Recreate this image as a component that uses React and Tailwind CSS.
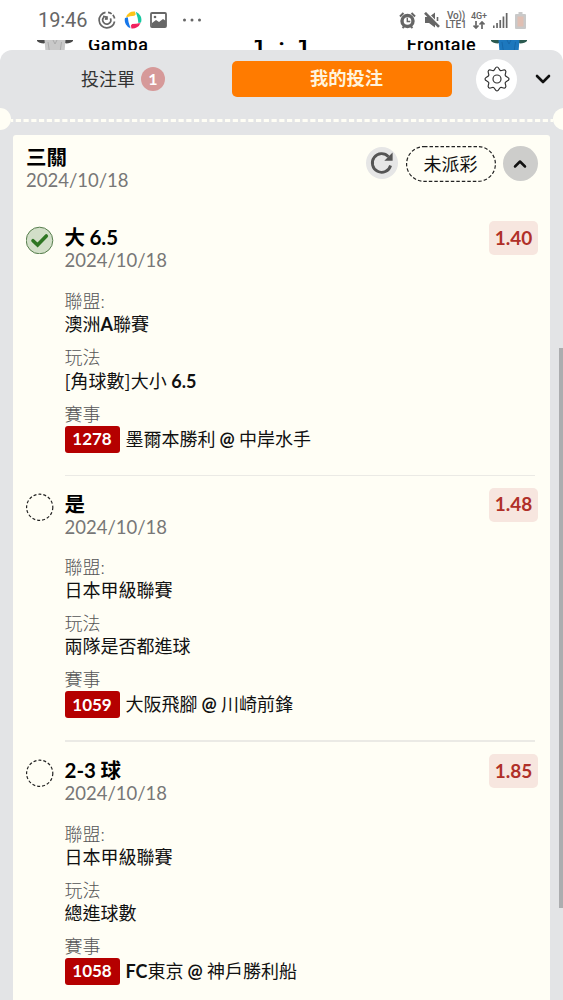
import { ChevronDown, ChevronUp } from 'lucide-react'

const bets = [
  {
    pick: <>大 6.5</>,
    date: '2024/10/18',
    odds: '1.40',
    won: true,
    league: <>澳洲<b className="font-bold">A</b>聯賽</>,
    play: <><span className="font-['Noto_Sans_CJK_TC',sans-serif]">[角球數]</span>大小 <b className="font-bold">6.5</b></>,
    code: '1278',
    match: <>墨爾本勝利 <At /> 中岸水手</>,
  },
  {
    pick: <>是</>,
    date: '2024/10/18',
    odds: '1.48',
    won: false,
    league: <>日本甲級聯賽</>,
    play: <>兩隊是否都進球</>,
    code: '1059',
    match: <>大阪飛腳 <At /> 川崎前鋒</>,
  },
  {
    pick: <>2-3 球</>,
    date: '2024/10/18',
    odds: '1.85',
    won: false,
    league: <>日本甲級聯賽</>,
    play: <>總進球數</>,
    code: '1058',
    match: <><b className="font-bold">FC</b>東京 <At /> 神戶勝利船</>,
  },
]

function At() {
  return <b className="font-bold">@</b>
}

function StatusBar() {
  return (
    <div className="flex h-10 shrink-0 items-center bg-white pl-[38px] pr-[37px] text-[#666]">
      <span className="w-[60px] font-['Roboto',sans-serif] text-[20px] leading-none tracking-[-0.1px]">19:46</span>
      <svg width="18" height="18" viewBox="0 0 18 18" fill="none" stroke="#666" strokeWidth="1.7">
        <path d="M7.5 1.4A7.8 7.8 0 1 0 16.6 10.5" />
        <path d="M10 1.3A7.8 7.8 0 0 1 16.7 8" strokeDasharray="4 1.5" />
        <path d="M6 6.2A4 4 0 1 0 12.4 7.4" />
        <path d="M9 8.8V5.2M5 5.4l3.2.5-.6 3" />
      </svg>
      <svg className="ml-[8px]" width="18" height="18" viewBox="0 0 18 18">
        <path d="M2 6.500A8 8 0 0 1 11 .6L11.500 3.500Q7 4 2 6.500Z" fill="#fcc419" />
        <path d="M11.800 .8A8.600 8.600 0 0 1 17 11.500L14.400 12Q14 7 11.800 .8Z" fill="#17c8a0" />
        <path d="M16.500 12A8.400 8.400 0 0 1 7.400 17.500L7 14.500Q12 14 16.500 12Z" fill="#f0215d" />
        <path d="M6.500 17.200A8.600 8.600 0 0 1 1 7L3.800 6.200Q4 11 6.500 17.200Z" fill="#1677ea" />
        <path d="M2 6.500Q7 3 12 2.500L10.500 4.800Q6 5 2 6.500Z" fill="#fcc419" />
        <path d="M16.500 12Q12 15 6.500 15.500L8 13Q12 13 16.500 12Z" fill="#f0215d" />
      </svg>
      <svg className="ml-[8px]" width="17" height="16" viewBox="0 0 17 16">
        <rect x="1" y="1" width="15" height="14" rx="1" fill="none" stroke="#666" strokeWidth="1.8" />
        <path d="M2 14V11l4-3 3 2 4-3 3 2v5Z" fill="#666" />
        <circle cx="5" cy="5" r="1.3" fill="#666" />
      </svg>
      <svg className="ml-[15px]" width="20" height="4" viewBox="0 0 20 4" fill="#666">
        <circle cx="2.5" cy="2" r="1.5" />
        <circle cx="10" cy="2" r="1.5" />
        <circle cx="17.5" cy="2" r="1.5" />
      </svg>
      <div className="ml-auto flex items-center">
        <svg width="17" height="17" viewBox="0 0 17 17">
          <circle cx="8.5" cy="9" r="5.5" fill="none" stroke="#666" strokeWidth="3.4" />
          <path d="M8.3 5.800v3.7h3" fill="none" stroke="#666" strokeWidth="1.400" />
          <path d="M1 4.500L4.500 1M16 4.500L12.500 1M3.500 16l2-2M13.500 16l-2-2" stroke="#666" strokeWidth="2" />
        </svg>
        <svg className="ml-[8px]" width="16" height="16" viewBox="0 0 16 16">
          <path d="M1 5h4l6-4.500v15l-6-4.500H1Z" fill="#666" />
          <path d="M3 .5l14 14" stroke="#fff" strokeWidth="1.500" />
          <path d="M1 .8l14 14" stroke="#666" strokeWidth="2.600" />
          <path d="M13.500 5v4" stroke="#666" strokeWidth="1.600" />
        </svg>
        <div className="ml-[4px] w-[24px] text-center font-['Roboto',sans-serif] text-[10px] font-medium leading-[9px] tracking-[-0.2px]">
          <div>Vo))</div>
          <div>LTE1</div>
        </div>
        <div className="ml-[2px] flex w-[18px] flex-col items-center font-['Roboto',sans-serif] text-[9px] font-medium leading-[9px]">
          <span>4G+</span>
          <svg width="12" height="8" viewBox="0 0 12 8" fill="none" stroke="#666" strokeWidth="1.700">
            <path d="M3 0v7M.5 4.500L3 7l2.500-2.500M9 8V1M6.500 3.500L9 1l2.500 2.500" />
          </svg>
        </div>
        <svg className="ml-[5px]" width="15" height="15" viewBox="0 0 15 15" fill="#666">
          <path d="M0 12.500h1.600V15H0ZM3.200 10h1.700v5H3.200ZM6.400 7h1.700v8H6.400ZM9.600 3.500h1.700V15H9.600ZM12.800 0h1.700v15h-1.700Z" />
        </svg>
        <svg className="ml-[7px]" width="11" height="17" viewBox="0 0 11 17">
          <path d="M3.500 0h4v2H10a1 1 0 0 1 1 1v13a1 1 0 0 1-1 1H1a1 1 0 0 1-1-1V3a1 1 0 0 1 1-1h2.500Z" fill="#c9c9c9" />
          <rect x="2.500" y="4.500" width="6" height="10" fill="#e0bfb3" />
        </svg>
      </div>
    </div>
  )
}

function Shirt({ body, trim, shade }) {
  return (
    <svg width="36" height="12" viewBox="0 0 36 12">
      <path d="M0 0h10v1.500L7 3.500Q2 3 0 1ZM36 0H26v1.500l3 2Q34 3 36 1Z" fill={trim} />
      <path d="M7.500 0h21l-1 12h-19Z" fill={body} />
      <path d="M11 2l1.500 10M24.500 2L23 12M16 0l2 4 2-4" stroke={shade} fill="none" />
    </svg>
  )
}

// bottom edge of the match header that stays visible above the sheet
function MatchHeader() {
  return (
    <div className="flex h-5 shrink-0 items-start overflow-hidden bg-white pl-[37px] pr-[36px] font-['Roboto',sans-serif] font-medium text-black">
      <Shirt body="#c9c9c9" trim="#4a4a4a" shade="#aaa" />
      <span className="ml-[15px] mt-[-5px] w-[62px] text-[18px] leading-5 tracking-[0.6px]">Gamba</span>
      <div className="ml-[103px] mt-[-5px] flex w-[57px] justify-between text-[22px] font-bold leading-[24px]">
        <span>1</span>
        <span>:</span>
        <span>1</span>
      </div>
      <span className="ml-auto mr-[15px] mt-[-5px] text-[18px] leading-5 tracking-[0.4px]">Frontale</span>
      <Shirt body="#1d78be" trim="#2b5a50" shade="#1767a8" />
    </div>
  )
}

function Tabs() {
  return (
    <div className="flex h-[58px] shrink-0 items-center">
      <div className="flex w-[232px] items-center pl-[81px] text-[18px] text-[#333]">
        <span>投注單</span>
        <span className="ml-[6px] flex size-[24px] items-center justify-center rounded-full bg-[#d69999] text-[16px] font-bold leading-none text-white">1</span>
      </div>
      <div className="flex h-9 w-[220px] items-center justify-center rounded-[5px] bg-[#ff7b00] pl-[9px] text-[18.300px] font-bold text-[#fff3dc]">我的投注</div>
      <div className="ml-6 flex size-[41px] items-center justify-center rounded-full bg-white">
        <svg width="26" height="26" viewBox="0 0 26 26" fill="none" stroke="#333" strokeWidth="1.2" strokeLinejoin="round">
          <path d="M13 1C15 1 14.800 4 16.500 4.600S19.800 2.800 21.400 4.400 20.600 7.700 21.300 9.400 25 11 25 13s-3 1.900-3.700 3.600 1.700 3.400.1 5-3.200-.8-4.900-.1S15 25 13 25s-1.800-2.900-3.500-3.500-3.300 1.700-4.900.1.800-3.300.1-5S1 15 1 13s3-1.900 3.700-3.600-1.700-3.400-.1-5 3.200.8 4.900.2S11 1 13 1Z" />
          <circle cx="13" cy="13" r="4" />
        </svg>
      </div>
      <ChevronDown className="ml-[14px]" size={24} color="#111" strokeWidth={2.6} />
    </div>
  )
}

function Perforation() {
  return (
    <div className="flex h-[22px] shrink-0 items-center overflow-hidden">
      <div className="-ml-[11px] size-[22px] shrink-0 rounded-full bg-[#fffef5]" />
      <svg className="mt-[2px] h-[3px] flex-1" fill="none">
        <path d="M0 1.500H560" stroke="#fffef5" strokeWidth="3" strokeDasharray="5.200 2.550" strokeDashoffset="3" />
      </svg>
      <div className="-mr-[12px] size-[22px] shrink-0 rounded-full bg-[#fffef5]" />
    </div>
  )
}

function BetMark({ won }) {
  return (
    <svg className="mt-[1px]" width="28" height="28" viewBox="0 0 28 28" fill="none">
      {won ? (
        <>
          <circle cx="13.500" cy="14.500" r="13.300" fill="#d2dfc8" stroke="#567d4c" />
          <path d="M7 14.700l4.600 4.300 8.700-9" stroke="#2f7623" strokeWidth="3.600" strokeLinecap="round" />
        </>
      ) : (
        <circle cx="13.700" cy="14.300" r="13.100" stroke="#222" strokeWidth="1.200" strokeDasharray="3 2" />
      )}
    </svg>
  )
}

function Field({ label, children }) {
  return (
    <div className="mb-[10px] text-[18px] leading-[23px]">
      <div className="font-light text-[#555]">{label}</div>
      <div className="text-[#111]">{children}</div>
    </div>
  )
}

function Bet({ bet, last }) {
  return (
    <div className="flex h-[266.5px] shrink-0 pl-[13px] pr-[12px]">
      <BetMark won={bet.won} />
      <div className="ml-[10.500px] flex-1">
        <div className="flex h-[64.5px] justify-between">
          <div>
            <div className="text-[20.500px] font-bold leading-[24px] text-black [word-spacing:-0.500px]">{bet.pick}</div>
            <div className="text-[18.500px] leading-[22px] text-[#777]">{bet.date}</div>
          </div>
          <div className="mt-[-4px] flex h-[34px] w-[49px] items-center justify-center rounded-[5px] bg-[#f7e6df] text-[19px] font-bold text-[#b03028]">{bet.odds}</div>
        </div>
        <Field label="聯盟:">{bet.league}</Field>
        <Field label="玩法">{bet.play}</Field>
        <div className="text-[18px] font-light leading-[23px] text-[#555]">賽事</div>
        <div className="flex h-[27px] items-center text-[18px] text-[#111]">
          <span className="mr-[6px] flex h-[27px] w-[55px] items-center justify-center rounded-[3px] bg-[#b50000] text-[17px] font-bold text-white">{bet.code}</span>
          <span className="leading-[27px] [word-spacing:-0.500px]">{bet.match}</span>
        </div>
        {!last && <div className="mr-[3px] mt-[22px] h-[1.500px] bg-[#ebeae5]" />}
      </div>
    </div>
  )
}

export default function App() {
  return (
    <div className="flex h-[1000px] w-[563px] flex-col overflow-hidden bg-white font-['Lato','Noto_Sans_CJK_TC',sans-serif]">
      <StatusBar />
      <MatchHeader />
      <div className="relative -mt-[10px] flex flex-1 flex-col overflow-hidden rounded-t-[12px] bg-[#e3e4e6]">
        <Tabs />
        <Perforation />
        <div className="mx-[13px] mt-[5px] flex flex-1 flex-col overflow-hidden rounded-t-[3px] bg-[#fffef5]">
          <div className="flex h-[90px] shrink-0 pl-[13px] pr-[12.500px] pt-[10px]">
            <div className="flex-1">
              <div className="text-[20.500px] font-bold leading-[24px] text-black">三關</div>
              <div className="text-[18.500px] leading-[22px] text-[#777]">2024/10/18</div>
            </div>
            <div className="mt-[2px] flex size-8 items-center justify-center rounded-full bg-[#e6e6e6]">
              <svg width="24" height="24" viewBox="0 0 24 24">
                <path d="M20.600 14.500A9.300 9.300 0 1 1 18.500 5.700" fill="none" stroke="#555" strokeWidth="2.800" />
                <path d="M22.600 1.500V9.800H14.300Z" fill="#555" />
              </svg>
            </div>
            <div className="relative ml-[8px] mt-[1px] flex h-9 w-[90px] items-center justify-center text-[18px] text-[#111]">
              <svg className="absolute inset-0" width="90" height="36" fill="none">
                <rect x=".6" y=".6" width="88.800" height="34.800" rx="17.400" stroke="#222" strokeWidth="1.200" strokeDasharray="3.500 2" />
              </svg>
              未派彩
            </div>
            <div className="ml-[7px] mt-[1px] flex size-[35px] items-center justify-center rounded-full bg-[#cdcdcb]">
              <ChevronUp size={20} color="#111" strokeWidth={3} />
            </div>
          </div>
          {bets.map((bet, i) => (
            <Bet key={bet.code} bet={bet} last={i === bets.length - 1} />
          ))}
        </div>
        <div className="absolute right-0 top-[298px] h-[560px] w-[4px] bg-[#acadaf]" />
      </div>
    </div>
  )
}
